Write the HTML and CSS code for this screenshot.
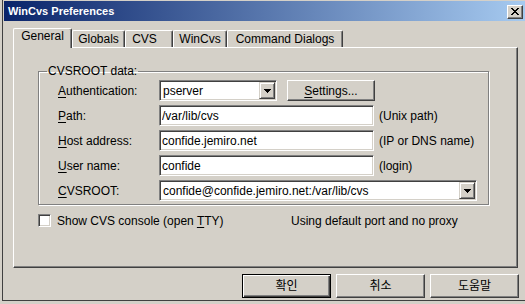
FILE: index.html
```html
<!DOCTYPE html>
<html>
<head>
  <title>WinCvs Preferences</title>
  <link rel="stylesheet" href="styles.css">
</head>
<body>
<div class="window">

  <div class="titlebar">
    <span class="title">WinCvs Preferences</span>
    <span class="close">
      <svg width="8" height="7" viewBox="0 0 8 7"><path d="M0 0h2v1H0zM6 0h2v1H6zM1 1h2v1H1zM5 1h2v1H5zM2 2h4v1H2zM3 3h2v1H3zM2 4h4v1H2zM1 5h2v1H1zM5 5h2v1H5zM0 6h2v1H0zM6 6h2v1H6z"/></svg>
    </span>
  </div>

  <div class="content">
    <div class="tabs">
      <div class="tab active t-general">General</div>
      <div class="tab t-globals">Globals</div>
      <div class="tab t-cvs">CVS</div>
      <div class="tab t-wincvs">WinCvs</div>
      <div class="tab t-dialogs">Command Dialogs</div>
    </div>

    <div class="panel">
      <fieldset class="group">
        <legend>CVSROOT data:</legend>
        <div class="fields">
          <span class="label"><u>A</u>uthentication:</span>
          <div class="auth-row">
            <div class="combo sunken auth">
              <span class="combo-text">pserver</span>
              <span class="drop raised-light"><svg width="7" height="4" viewBox="0 0 7 4"><path d="M0 0h7v1H6v1H5v1H4v1H3V3H2V2H1V1H0z"/></svg></span>
            </div>
            <button class="btn settings"><u>S</u>ettings...</button>
          </div>

          <span class="label"><u>P</u>ath:</span>
          <input class="field sunken" type="text" value="/var/lib/cvs">
          <span class="hint">(Unix path)</span>

          <span class="label"><u>H</u>ost address:</span>
          <input class="field sunken" type="text" value="confide.jemiro.net">
          <span class="hint">(IP or DNS name)</span>

          <span class="label"><u>U</u>ser name:</span>
          <input class="field sunken" type="text" value="confide">
          <span class="hint">(login)</span>

          <span class="label"><u>C</u>VSROOT:</span>
          <div class="combo sunken root">
            <span class="combo-text">confide@confide.jemiro.net:/var/lib/cvs</span>
            <span class="drop raised-light"><svg width="7" height="4" viewBox="0 0 7 4"><path d="M0 0h7v1H6v1H5v1H4v1H3V3H2V2H1V1H0z"/></svg></span>
          </div>
        </div>
      </fieldset>

      <div class="options">
        <label class="check-label"><span class="checkbox"></span><span>Show CVS console (open <u>T</u>TY)</span></label>
        <span class="status">Using default port and no proxy</span>
      </div>
    </div>

    <div class="buttons">
      <button class="btn dialog default">확인</button>
      <button class="btn dialog">취소</button>
      <button class="btn dialog">도움말</button>
    </div>
  </div>

</div>
</body>
</html>
```

FILE: styles.css
```css
* { box-sizing: border-box; }

body {
  margin: 0;
  width: 525px;
  height: 304px;
  overflow: hidden;
  background: #d4d0c8;
  font-family: "Liberation Sans", "Noto Sans CJK KR", sans-serif;
  font-size: 12px;
  line-height: 14px;
  color: #000;
}

u { text-decoration: underline; text-underline-offset: 2px; }

.window {
  margin-left: 2px;
  height: 301px;
  padding: 1px 0 0 1px;
  border-left: 1px solid #404040;
  border-bottom: 1px solid #404040;
}

/* title bar */
.titlebar {
  height: 20px;
  display: flex;
  align-items: center;
  justify-content: space-between;
  padding: 0 2px 0 4px;
  background: linear-gradient(to right, #0a246a, #a6caf0);
  color: #fff;
  font-weight: bold;
  font-size: 11px;
}

.close {
  width: 16px;
  height: 14px;
  margin-top: 1px;
  display: flex;
  align-items: center;
  justify-content: center;
  background: #d4d0c8;
  border: 1px solid;
  border-color: #fff #404040 #404040 #fff;
  box-shadow: inset -1px -1px #808080;
}

.close svg { display: block; fill: #000; }

.content { padding: 7px 0 0 9px; }

/* tabs */
.tabs {
  display: flex;
  align-items: flex-end;
  height: 19px;
}

.tab {
  height: 17px;
  padding-top: 1px;
  text-align: center;
  border-top: 1px solid #fff;
  border-left: 1px solid #fff;
  border-right: 1px solid #404040;
  border-radius: 2px 2px 0 0;
  box-shadow: inset -1px 0 #808080;
}

.tab.active {
  height: 20px;
  margin-bottom: -1px;
  padding-top: 0;
  position: relative;
  z-index: 1;
  background: #d4d0c8;
}

.t-general { width: 59px; }
.t-globals { width: 53px; }
.t-cvs     { width: 48px; padding-right: 9px; }
.t-wincvs  { width: 54px; }
.t-dialogs { width: 116px; }

.panel {
  width: 505px;
  height: 221px;
  padding-left: 24px;
  border-top: 1px solid #fff;
  border-left: 1px solid #fff;
  border-right: 1px solid #404040;
  border-bottom: 1px solid #404040;
  box-shadow: inset -1px -1px #808080;
}

/* group box */
.group {
  margin: 16px 0 0;
  padding: 2px 0 3px 19px;
  width: 451px;
  min-width: 0;
  border: 1px solid #808080;
  box-shadow: inset 1px 1px #fff, 1px 1px #fff;
}

.group legend {
  margin-left: -11px;
  padding: 0 1px;
}

.fields {
  display: grid;
  grid-template-columns: 101px 215px auto;
  grid-auto-rows: 21px;
  row-gap: 4px;
  align-items: center;
}

.hint { padding-left: 5px; }

.auth-row {
  grid-column: 2 / 4;
  display: flex;
  gap: 10px;
  height: 21px;
}

.sunken {
  border: 1px solid;
  border-color: #808080 #fff #fff #808080;
  box-shadow: inset 1px 1px #404040, inset -1px -1px #d4d0c8;
  background: #fff;
}

.field {
  height: 21px;
  width: 215px;
  margin: 0;
  padding: 0 2px;
  font: inherit;
  color: #000;
  outline: none;
}

.combo {
  height: 21px;
  display: flex;
  align-items: center;
  padding: 1px;
}

.combo.auth { width: 118px; }
.combo.root { grid-column: 2 / 4; width: 318px; }

.combo-text {
  flex: 1;
  padding-left: 2px;
  white-space: nowrap;
  overflow: hidden;
}

.drop {
  width: 16px;
  height: 17px;
  display: flex;
  align-items: center;
  justify-content: center;
  padding-top: 1px;
}

.drop svg { display: block; fill: #000; }

.raised-light {
  background: #d4d0c8;
  border: 1px solid;
  border-color: #d4d0c8 #404040 #404040 #d4d0c8;
  box-shadow: inset 1px 1px #fff, inset -1px -1px #808080;
}

/* push buttons */
.btn {
  margin: 0;
  padding: 0;
  font: inherit;
  color: #000;
  background: #d4d0c8;
  border: 1px solid;
  border-color: #fff #404040 #404040 #fff;
  box-shadow: inset -1px -1px #808080;
}

.settings { width: 88px; height: 21px; }

/* checkbox row */
.options {
  display: flex;
  align-items: center;
  height: 13px;
  margin-top: 9px;
}

.check-label {
  width: 253px;
  display: flex;
  align-items: center;
}

.checkbox {
  width: 13px;
  height: 13px;
  margin-right: 6px;
  border: 1px solid;
  border-color: #808080 #fff #fff #808080;
  box-shadow: inset 1px 1px #404040, inset -1px -1px #d4d0c8;
  background: #fff;
}

/* dialog buttons */
.buttons {
  display: flex;
  justify-content: flex-end;
  gap: 5px;
  width: 506px;
  margin-top: 6px;
}

.dialog {
  width: 89px;
  height: 24px;
  font-size: 12px;
}

.dialog.default {
  border-color: #000;
  box-shadow: inset 1px 1px #fff, inset -1px -1px #404040, inset -2px -2px #808080;
}
```
